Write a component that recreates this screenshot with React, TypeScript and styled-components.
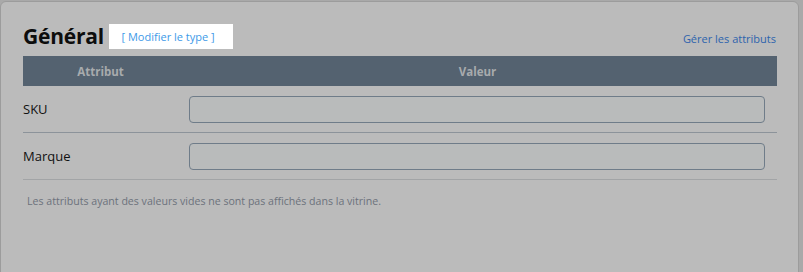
import * as React from 'react';
import styled, { createGlobalStyle } from 'styled-components';

const GlobalStyle = createGlobalStyle`
  html, body {
    margin: 0;
    padding: 0;
    background: #a9a9a9;
    font-family: "Open Sans", "Noto Sans", sans-serif;
  }
`;

const Page = styled.div`
  width: 803px;
  height: 272px;
  overflow: hidden;
  background: #a9a9a9;
`;

const Panel = styled.section`
  margin-top: 1px;
  width: 799px;
  height: 300px;
  background: #bbbbbb;
  border: 1px solid #9c9c9c;
  border-radius: 6px;
  padding: 22px 22px 0 22px;
  box-sizing: border-box;
`;

const Head = styled.div`
  display: flex;
  align-items: flex-end;
  justify-content: space-between;
  height: 25px;
  margin-bottom: 7px;
`;

const TitleGroup = styled.div`
  display: flex;
  align-items: flex-end;
  gap: 5px;
`;

const Title = styled.h2`
  margin: 0;
  font-size: 21px;
  line-height: 26px;
  font-weight: 700;
  color: #0d0d0d;
  letter-spacing: -0.2px;
`;

const TypeButton = styled.button`
  width: 124px;
  height: 25px;
  border: none;
  background: #ffffff;
  color: #3d9ae8;
  font-family: inherit;
  font-size: 11px;
  padding: 0 6px 0 0;
  cursor: pointer;
`;

const ManageLink = styled.a`
  font-size: 11px;
  color: #2d63ad;
  text-decoration: none;
  line-height: 16px;
  margin-bottom: 2px;
`;

const Table = styled.table`
  width: 754px;
  border-collapse: collapse;
`;

const HeadCell = styled.th<{ $width?: number }>`
  height: 30px;
  padding: 0;
  background: #546270;
  color: #a8abad;
  font-size: 11.5px;
  font-weight: 700;
  text-align: center;
  width: ${p => (p.$width ? `${p.$width}px` : 'auto')};
`;

const Row = styled.tr<{ $line: string }>`
  border-bottom: 1px solid ${p => p.$line};
`;

const LabelCell = styled.td`
  height: 46px;
  padding: 0;
  font-size: 13px;
  color: #111111;
`;

const ValueCell = styled.td`
  padding: 0 12px 0 11px;
`;

const Field = styled.input`
  display: block;
  width: 100%;
  height: 27px;
  box-sizing: border-box;
  border: 1px solid #6f7c89;
  border-radius: 4px;
  background: #b9bbbb;
  outline: none;
`;

const Note = styled.p`
  margin: 14px 0 0 4px;
  font-size: 10.6px;
  color: #6c727b;
`;

const attributes = [
  { name: 'SKU', line: '#8c939a' },
  { name: 'Marque', line: '#a2a4a6' },
];

export default function App() {
  return (
    <Page>
      <GlobalStyle />
      <Panel>
        <Head>
          <TitleGroup>
            <Title>Général</Title>
            <TypeButton>[ Modifier le type ]</TypeButton>
          </TitleGroup>
          <ManageLink href="#">Gérer les attributs</ManageLink>
        </Head>
        <Table>
          <thead>
            <tr>
              <HeadCell $width={155}>Attribut</HeadCell>
              <HeadCell>Valeur</HeadCell>
            </tr>
          </thead>
          <tbody>
            {attributes.map(a => (
              <Row key={a.name} $line={a.line}>
                <LabelCell>{a.name}</LabelCell>
                <ValueCell>
                  <Field type="text" />
                </ValueCell>
              </Row>
            ))}
          </tbody>
        </Table>
        <Note>Les attributs ayant des valeurs vides ne sont pas affichés dans la vitrine.</Note>
      </Panel>
    </Page>
  );
}
